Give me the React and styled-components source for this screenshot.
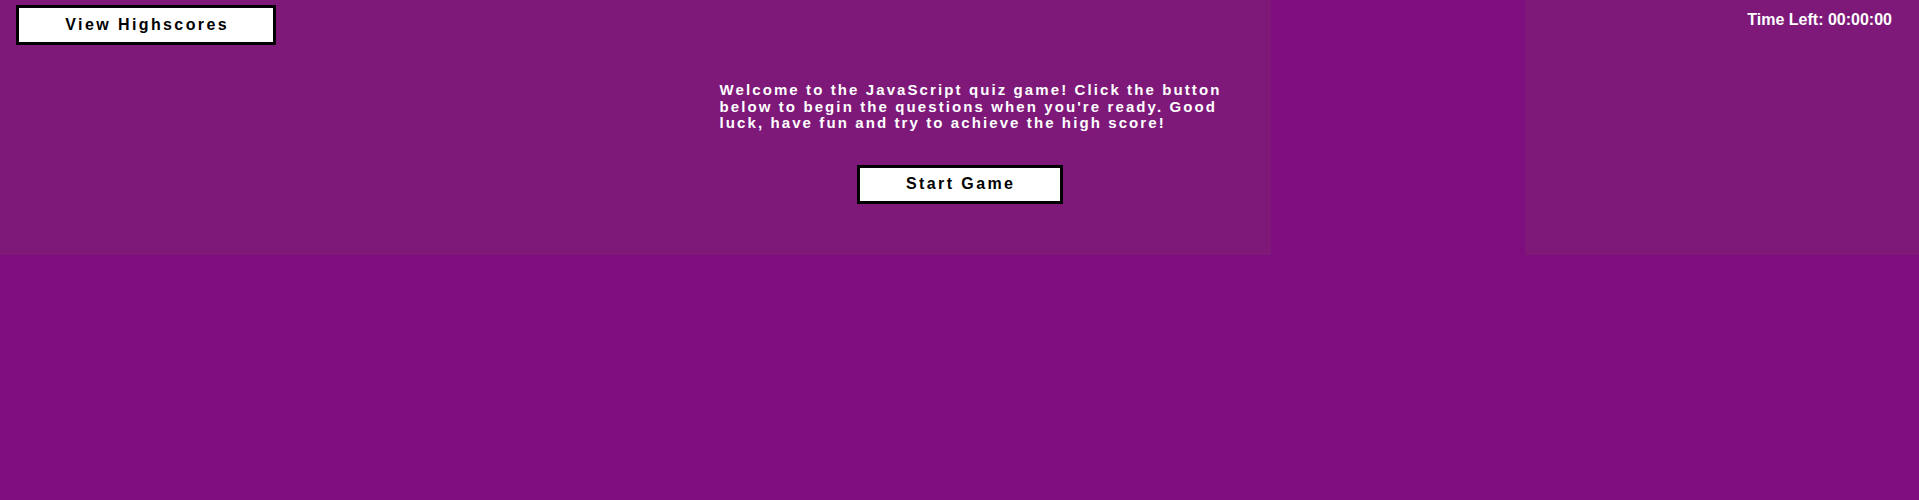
import React from "react";
import styled, { createGlobalStyle } from "styled-components";

const GlobalStyle = createGlobalStyle`
  html, body {
    margin: 0;
    padding: 0;
    background: #7e0e7e;
    font-family: "Liberation Sans", Arial, Helvetica, sans-serif;
    color: #ffffff;
  }
  body { min-height: 500px; }
`;

const Top = styled.div`
  display: grid;
  grid-template-columns: 1271px 254px 1fr;
  grid-template-rows: auto 1fr;
  height: 255px;
`;

const Panel = styled.div`
  grid-column: ${(p) => p.$col};
  grid-row: 1 / -1;
  background: #7e197a;
`;

const Header = styled.header`
  grid-column: 1 / -1;
  grid-row: 1;
  display: flex;
  justify-content: space-between;
  align-items: flex-start;
  padding: 5px 27px 0 16px;
`;

const Button = styled.button`
  box-sizing: border-box;
  width: ${(p) => p.$w}px;
  height: ${(p) => p.$h}px;
  padding: 0;
  background: #ffffff;
  border: 3px solid #000000;
  border-radius: 0;
  color: #000000;
  font-family: "Liberation Sans", Arial, Helvetica, sans-serif;
  font-weight: 700;
  font-size: 16px;
  letter-spacing: 2.4px;
  text-indent: 2.4px;
  cursor: pointer;
`;

const Timer = styled.div`
  margin-top: 6px;
  font-size: 16px;
  font-weight: 700;
  line-height: 18px;
  color: #ffffff;
`;

const Intro = styled.section`
  grid-column: 1 / -1;
  grid-row: 2;
  display: flex;
  flex-direction: column;
  align-items: center;
  padding-top: 37px;
`;

const IntroText = styled.p`
  box-sizing: border-box;
  width: 506px;
  margin: 0 0 0 26px;
  font-size: 15px;
  font-weight: 700;
  line-height: 16.5px;
  letter-spacing: 2.1px;
  color: #ffffff;
  text-align: left;
`;

const StartWrap = styled.div`
  margin-top: 33px;
`;

export default function App() {
  return (
    <>
      <GlobalStyle />
      <Top>
        <Panel $col={1} />
        <Panel $col={3} />
        <Header>
          <Button $w={260} $h={40}>View Highscores</Button>
          <Timer>Time Left: 00:00:00</Timer>
        </Header>
        <Intro>
          <IntroText>
            Welcome to the JavaScript quiz game! Click the button below to begin
            the questions when you're ready. Good luck, have fun and try to
            achieve the high score!
          </IntroText>
          <StartWrap>
            <Button $w={206} $h={39}>Start Game</Button>
          </StartWrap>
        </Intro>
      </Top>
    </>
  );
}
